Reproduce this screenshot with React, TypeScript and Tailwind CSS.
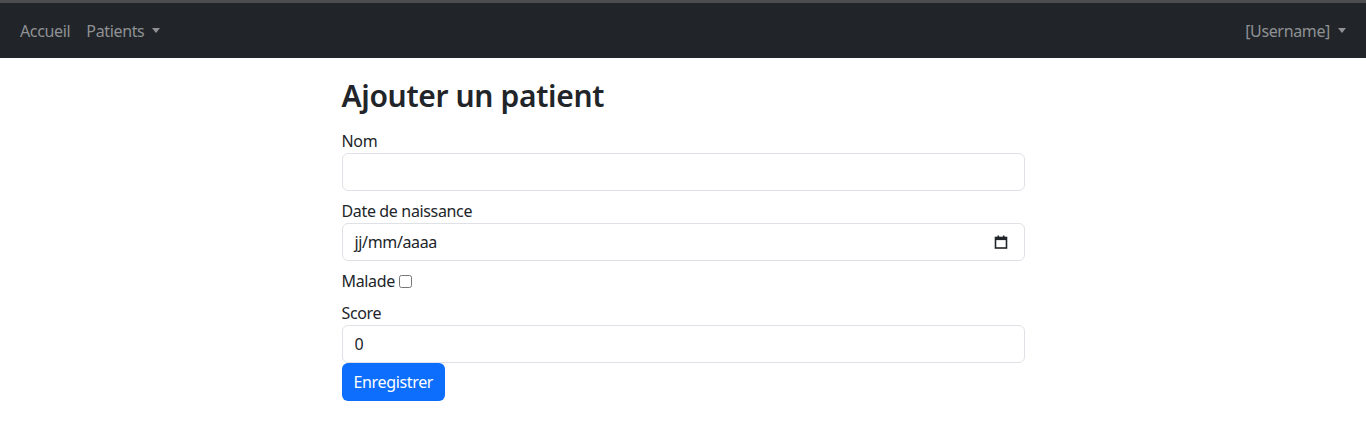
import React from "react";

const font = { fontFamily: '"Noto Sans", "Open Sans", Arial, sans-serif' };

const Caret = () => (
  <span className="ml-[8px] inline-block h-0 w-0 border-x-[4px] border-t-[5px] border-x-transparent border-t-current align-[3px]" />
);

const CalendarIcon = () => (
  <svg width="14" height="14" viewBox="0 0 14 14" fill="none">
    <rect x="1.5" y="2.5" width="11" height="10.5" stroke="#212529" strokeWidth="1.6" fill="none" />
    <rect x="1.5" y="2.5" width="11" height="2.6" fill="#212529" />
    <rect x="3.5" y="0.5" width="1.6" height="2.5" fill="#212529" />
    <rect x="8.9" y="0.5" width="1.6" height="2.5" fill="#212529" />
  </svg>
);

const inputClass =
  "block h-[38px] w-full rounded-[6px] border border-[#dee2e6] bg-white px-3 text-base text-[#212529] outline-none";

const App: React.FC = () => {
  return (
    <div className="min-h-[424px] bg-white text-[#212529] tracking-[-0.35px]" style={font}>
      <div className="h-[3px] bg-[#4d4d4f]" />
      <nav className="flex h-[55px] items-center justify-between bg-[#212529] px-[20px] text-base text-[#8f9194]">
        <div className="flex items-center gap-[16px]">
          <span>Accueil</span>
          <span className="flex items-center">
            Patients
            <Caret />
          </span>
        </div>
        <span className="flex items-center">
          [Username]
          <Caret />
        </span>
      </nav>

      <main className="mx-auto w-1/2 pt-[19px]">
        <h2 className="mb-[14px] text-[30px] font-semibold leading-[38px]">Ajouter un patient</h2>
        <form className="text-base leading-6">
          <div className="mb-2">
            <label className="block">Nom</label>
            <input type="text" className={inputClass} />
          </div>
          <div className="mb-2">
            <label className="block">Date de naissance</label>
            <div className={inputClass + " flex items-center justify-between pr-[16px]"}>
              <span>jj/mm/aaaa</span>
              <CalendarIcon />
            </div>
          </div>
          <div className="mb-2 flex items-center">
            <label>Malade</label>
            <input type="checkbox" className="ml-[4px] h-[13px] w-[13px]" />
          </div>
          <div>
            <label className="block">Score</label>
            <input type="number" defaultValue={0} className={inputClass} />
          </div>
          <button
            type="button"
            className="h-[38px] rounded-[6px] bg-[#0d6efd] px-3 text-base text-white"
          >
            Enregistrer
          </button>
        </form>
      </main>
    </div>
  );
};

export default App;
